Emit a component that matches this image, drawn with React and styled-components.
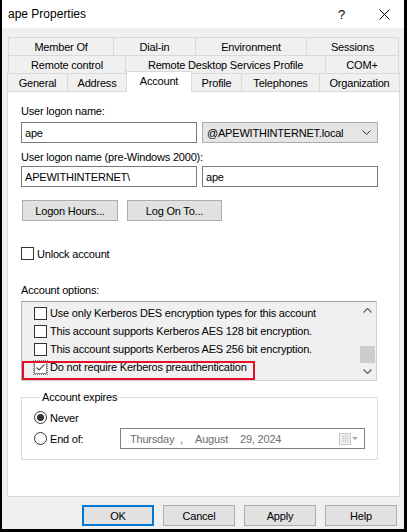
import React from 'react';
import styled, { createGlobalStyle } from 'styled-components';

const GlobalStyle = createGlobalStyle`
  html, body {
    margin: 0;
    padding: 0;
    background: #fff;
  }
  body {
    font-family: "Liberation Sans", Arial, sans-serif;
    font-size: 11px;
    letter-spacing: -0.2px;
    color: #000;
  }
  * {
    box-sizing: border-box;
  }
`;

const topTabs = [
  { label: 'Member Of', width: 105 },
  { label: 'Dial-in', width: 82 },
  { label: 'Environment', width: 111 },
  { label: 'Sessions', width: 93 },
];

const midTabs = [
  { label: 'Remote control', width: 117 },
  { label: 'Remote Desktop Services Profile', width: 200 },
  { label: 'COM+', width: 74 },
];

const frontTabs = [
  { label: 'General', width: 60 },
  { label: 'Address', width: 59 },
  { label: 'Account', width: 65, active: true },
  { label: 'Profile', width: 50 },
  { label: 'Telephones', width: 78 },
  { label: 'Organization', width: 81 },
];

const accountOptions = [
  { label: 'Use only Kerberos DES encryption types for this account' },
  { label: 'This account supports Kerberos AES 128 bit encryption.' },
  { label: 'This account supports Kerberos AES 256 bit encryption.' },
  { label: 'Do not require Kerberos preauthentication', checked: true, marked: true },
];

export default function App() {
  return (
    <>
      <GlobalStyle />
      <Window>
        <TitleBar>
          <Title>ape Properties</Title>
          <CaptionButton $w={45}>?</CaptionButton>
          <CaptionButton $w={40}>
            <svg width="11" height="11" viewBox="0 0 11 11">
              <path d="M0.5 0.5 L10.5 10.5 M10.5 0.5 L0.5 10.5" stroke="#000" strokeWidth="1" fill="none" />
            </svg>
          </CaptionButton>
        </TitleBar>

        <Body>
          <TabStrip>
            <TabRow $inset={1}>
              {topTabs.map((t) => (
                <Tab key={t.label} $w={t.width}>{t.label}</Tab>
              ))}
            </TabRow>
            <TabRow $inset={1}>
              {midTabs.map((t) => (
                <Tab key={t.label} $w={t.width}>{t.label}</Tab>
              ))}
            </TabRow>
            <TabRow $inset={0}>
              {frontTabs.map((t) => (
                <Tab key={t.label} $w={t.width} $active={t.active}>{t.label}</Tab>
              ))}
            </TabRow>
          </TabStrip>

          <Panel>
            <FieldLabel $top={13}>User logon name:</FieldLabel>
            <InputRow $top={4}>
              <TextBox>ape</TextBox>
              <ComboBox>
                <span>@APEWITHINTERNET.local</span>
                <svg width="9" height="5" viewBox="0 0 9 5">
                  <polyline points="0.5,0.5 4.5,4.5 8.5,0.5" stroke="#333" strokeWidth="1" fill="none" />
                </svg>
              </ComboBox>
            </InputRow>

            <FieldLabel $top={8}>User logon name (pre-Windows 2000):</FieldLabel>
            <InputRow $top={2}>
              <TextBox>APEWITHINTERNET\</TextBox>
              <TextBox>ape</TextBox>
            </InputRow>

            <ActionRow>
              <PushButton $w={96}>Logon Hours...</PushButton>
              <PushButton $w={95}>Log On To...</PushButton>
            </ActionRow>

            <CheckLine $top={26}>
              <CheckBox />
              <span>Unlock account</span>
            </CheckLine>

            <FieldLabel $top={24}>Account options:</FieldLabel>
            <ListBox>
              <ItemList>
                {accountOptions.map((o) => (
                  <ListItem key={o.label} $marked={o.marked}>
                    <CheckBox $focus={o.checked}>
                      {o.checked && (
                        <svg width="11" height="11" viewBox="0 0 11 11">
                          <polyline points="1.5,5.5 4,8 9.5,2.5" stroke="#555" strokeWidth="1.2" fill="none" />
                        </svg>
                      )}
                    </CheckBox>
                    <span>{o.label}</span>
                  </ListItem>
                ))}
              </ItemList>
              <ScrollBar>
                <ScrollArrow>
                  <svg width="9" height="5" viewBox="0 0 9 5">
                    <polyline points="0.5,4.5 4.5,0.5 8.5,4.5" stroke="#606060" strokeWidth="1.2" fill="none" />
                  </svg>
                </ScrollArrow>
                <ScrollTrack>
                  <ScrollThumb />
                </ScrollTrack>
                <ScrollArrow>
                  <svg width="9" height="5" viewBox="0 0 9 5">
                    <polyline points="0.5,0.5 4.5,4.5 8.5,0.5" stroke="#606060" strokeWidth="1.2" fill="none" />
                  </svg>
                </ScrollArrow>
              </ScrollBar>
            </ListBox>

            <GroupBox>
              <GroupLegend>Account expires</GroupLegend>
              <RadioLine $top={7}>
                <RadioOption>
                  <Radio $on />
                  <span>Never</span>
                </RadioOption>
              </RadioLine>
              <RadioLine $top={4}>
                <RadioOption>
                  <Radio />
                  <span>End of:</span>
                </RadioOption>
                <DatePicker>
                  <DateSegment $w={50}>Thursday</DateSegment>
                  <DateSegment $w={15}>,</DateSegment>
                  <DateSegment $w={45}>August</DateSegment>
                  <DateSegment $w={60}>29, 2024</DateSegment>
                  <DateIcon>
                    <svg width="19" height="12" viewBox="0 0 19 12">
                      <rect x="0.5" y="0.5" width="11" height="11" fill="#f4f4f4" stroke="#c4c4c4" />
                      <path d="M3 3 H10 M3 5.5 H10 M3 8 H10 M4 2 V10 M6.5 2 V10 M9 2 V10" stroke="#d4d4d4" strokeWidth="1" />
                      <polygon points="13,4 19,4 16,7" fill="#a8a8a8" />
                    </svg>
                  </DateIcon>
                </DatePicker>
              </RadioLine>
            </GroupBox>
          </Panel>

          <ButtonBar>
            <PushButton $w={72} $default>OK</PushButton>
            <PushButton $w={72}>Cancel</PushButton>
            <PushButton $w={72}>Apply</PushButton>
            <PushButton $w={72}>Help</PushButton>
          </ButtonBar>
        </Body>
      </Window>
    </>
  );
}

const Window = styled.div`
  width: 407px;
  height: 532px;
  display: flex;
  flex-direction: column;
  background: #f0f0f0;
  border-left: 2px solid #000;
  border-right: 3px solid #000;
  border-bottom: 3px solid #000;
`;

const TitleBar = styled.div`
  height: 28px;
  flex: 0 0 28px;
  display: flex;
  align-items: center;
  background: #fff;
  padding-left: 6px;
`;

const Title = styled.div`
  flex: 1;
  font-size: 12px;
  letter-spacing: 0;
  color: #000;
`;

const CaptionButton = styled.div`
  width: ${(p) => p.$w}px;
  height: 28px;
  display: flex;
  align-items: center;
  justify-content: center;
  font-size: 13px;
`;

const Body = styled.div`
  flex: 1;
  display: flex;
  flex-direction: column;
  padding: 9px 4px 0 5px;
`;

const TabStrip = styled.div`
  display: flex;
  flex-direction: column;
`;

const TabRow = styled.div`
  display: flex;
  height: 18px;
  padding: 0 ${(p) => p.$inset}px;
`;

const Tab = styled.div`
  position: relative;
  width: ${(p) => p.$w}px;
  flex: 0 0 ${(p) => p.$w}px;
  display: flex;
  align-items: center;
  justify-content: center;
  white-space: nowrap;
  background: ${(p) => (p.$active ? '#fff' : '#f0f0f0')};
  border-top: 1px solid #d9d9d9;
  border-left: 1px solid #d9d9d9;
  &:last-child {
    border-right: 1px solid #d9d9d9;
  }
  ${(p) =>
    p.$active &&
    `
    z-index: 2;
    height: 21px;
    margin-top: -2px;
    padding-bottom: 3px;
    width: ${p.$w + 1}px;
    flex-basis: ${p.$w + 1}px;
    margin-right: -1px;
    border-right: 1px solid #d9d9d9;
  `}
`;

const Panel = styled.div`
  height: 406px;
  flex: 0 0 406px;
  display: flex;
  flex-direction: column;
  background: #fff;
  border: 1px solid #d9d9d9;
  padding: 0 21px 0 13px;
`;

const FieldLabel = styled.div`
  margin-top: ${(p) => p.$top}px;
  line-height: 13px;
  height: 13px;
`;

const InputRow = styled.div`
  margin-top: ${(p) => p.$top}px;
  display: grid;
  grid-template-columns: 176px 176px;
  gap: 5px;
  height: 21px;
`;

const TextBox = styled.div`
  display: flex;
  align-items: center;
  padding-left: 3px;
  background: #fff;
  border: 1px solid #7a7a7a;
`;

const ComboBox = styled.div`
  display: flex;
  align-items: center;
  justify-content: space-between;
  padding: 0 6px 0 4px;
  background: #e5e5e5;
  border: 1px solid #adadad;
`;

const ActionRow = styled.div`
  margin-top: 13px;
  display: flex;
  gap: 9px;
  padding-left: 1px;
`;

const PushButton = styled.div`
  width: ${(p) => p.$w}px;
  height: 21px;
  display: flex;
  align-items: center;
  justify-content: center;
  background: #e1e1e1;
  border: ${(p) => (p.$default ? '2px solid #0078d7' : '1px solid #adadad')};
`;

const CheckLine = styled.div`
  margin-top: ${(p) => p.$top}px;
  display: flex;
  align-items: center;
  gap: 3px;
  height: 13px;
`;

const CheckBox = styled.div`
  width: 13px;
  height: 13px;
  flex: 0 0 13px;
  display: flex;
  align-items: center;
  justify-content: center;
  background: #fff;
  border: 1px solid ${(p) => (p.$focus ? '#8a8a8a' : '#333')};
  ${(p) => p.$focus && 'outline: 1px dotted #777; outline-offset: 0px;'}
`;

const ListBox = styled.div`
  margin-top: 4px;
  width: 356px;
  height: 80px;
  display: flex;
  background: #f0f0f0;
  border: 1px solid #d0d0d0;
  border-top-color: #a0a0a0;
  border-left-color: #b4b4b4;
`;

const ItemList = styled.div`
  flex: 1;
  padding-top: 2px;
  display: flex;
  flex-direction: column;
`;

const ListItem = styled.div`
  position: relative;
  height: 18px;
  flex: 0 0 18px;
  display: flex;
  align-items: center;
  gap: 3px;
  padding-left: 12px;
  white-space: nowrap;
  ${(p) =>
    p.$marked &&
    `
    &::after {
      content: '';
      position: absolute;
      left: 0;
      top: 3px;
      width: 229px;
      height: 15px;
      border: 2px solid #e4102a;
    }
  `}
`;

const ScrollBar = styled.div`
  width: 17px;
  flex: 0 0 17px;
  display: flex;
  flex-direction: column;
  background: #f0f0f0;
`;

const ScrollArrow = styled.div`
  height: 17px;
  flex: 0 0 17px;
  display: flex;
  align-items: center;
  justify-content: center;
`;

const ScrollTrack = styled.div`
  flex: 1;
  display: flex;
  flex-direction: column;
  justify-content: flex-end;
`;

const ScrollThumb = styled.div`
  height: 17px;
  margin: 0 1px;
  background: #cdcdcd;
`;

const GroupBox = styled.fieldset`
  margin: 10px 0 0 0;
  padding: 0 0 10px 12px;
  width: 357px;
  border: 1px solid #dcdcdc;
  display: flex;
  flex-direction: column;
`;

const GroupLegend = styled.legend`
  margin-left: 7px;
  padding: 0 1px;
  line-height: 13px;
`;

const RadioLine = styled.div`
  margin-top: ${(p) => p.$top}px;
  display: flex;
  align-items: center;
  min-height: 13px;
`;

const RadioOption = styled.div`
  width: 86px;
  display: flex;
  align-items: center;
  gap: 3px;
`;

const Radio = styled.div`
  width: 13px;
  height: 13px;
  flex: 0 0 13px;
  border-radius: 50%;
  border: 1px solid #333;
  background: #fff;
  display: flex;
  align-items: center;
  justify-content: center;
  &::after {
    content: '';
    display: ${(p) => (p.$on ? 'block' : 'none')};
    width: 7px;
    height: 7px;
    border-radius: 50%;
    background: #333;
  }
`;

const DatePicker = styled.div`
  width: 245px;
  height: 21px;
  display: flex;
  align-items: center;
  padding-left: 9px;
  border: 1px solid #828282;
  color: #6d6d6d;
`;

const DateSegment = styled.span`
  width: ${(p) => p.$w}px;
  flex: 0 0 ${(p) => p.$w}px;
  white-space: nowrap;
`;

const DateIcon = styled.span`
  margin-left: auto;
  margin-right: 6px;
  display: flex;
`;

const ButtonBar = styled.div`
  margin-top: 8px;
  display: flex;
  justify-content: flex-end;
  gap: 9px;
  padding-right: 3px;
`;
